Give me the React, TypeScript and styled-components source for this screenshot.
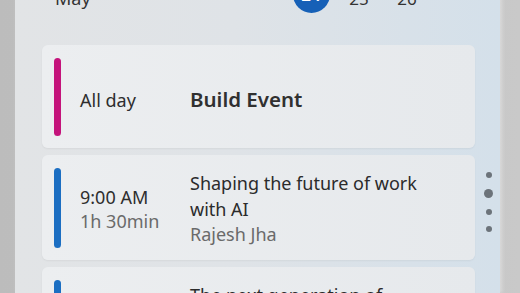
import styled, { createGlobalStyle } from "styled-components";

const GlobalStyle = createGlobalStyle`
  html, body {
    margin: 0;
    padding: 0;
  }
  body {
    font-family: "Noto Sans", "Open Sans", sans-serif;
    background: #bdbdbd;
  }
`;

const Page = styled.div`
  height: 293px;
  overflow: hidden;
  display: flex;
  padding: 0 20px 0 15px;
  background: linear-gradient(to right, #bcbcbc 0%, #c2c2c2 60%, #c9c9c9 100%);
`;

const Panel = styled.section`
  position: relative;
  flex: 1;
  margin-top: -40px;
  padding: 0 25px 0 27px;
  background: linear-gradient(to right, #e2e4e6 0%, #dfe3e7 45%, #d4e0ea 100%);
  box-shadow: 2px 0 4px rgba(255, 255, 255, 0.35);
`;

const Header = styled.header`
  height: 68px;
  display: flex;
  align-items: center;
  padding-left: 13px;
`;

const Month = styled.span`
  font-size: 18px;
  color: #333;
  margin-top: 8px;
`;

const Days = styled.div`
  display: flex;
  margin-left: auto;
  margin-right: 44px;
`;

const Day = styled.span<{ $today?: boolean }>`
  width: 48px;
  display: flex;
  justify-content: center;
  align-items: center;
  font-size: 17px;
  color: #333;
  margin-top: ${(p) => (p.$today ? "0" : "8px")};
`;

const TodayBadge = styled.span`
  width: 37px;
  height: 37px;
  border-radius: 50%;
  background: #1660b7;
  color: #fff;
  font-weight: 600;
  display: flex;
  align-items: center;
  justify-content: center;
`;

const List = styled.ul`
  list-style: none;
  margin: 17px 0 0;
  padding: 0;
  display: flex;
  flex-direction: column;
  gap: 7px;
`;

const Card = styled.li`
  display: flex;
  gap: 19px;
  padding: 13px 12px 12px;
  border-radius: 6px;
  background: linear-gradient(to right, #eceef0, #e6e9ec);
  box-shadow: 0 1px 2px rgba(0, 0, 0, 0.05);
`;

const Accent = styled.span<{ $color: string }>`
  flex: 0 0 7px;
  min-height: 78px;
  border-radius: 4px;
  background: ${(p) => p.$color};
`;

const Body = styled.div<{ $center?: boolean }>`
  display: flex;
  align-items: ${(p) => (p.$center ? "center" : "flex-start")};
  flex: 1;
  padding-top: ${(p) => (p.$center ? "5px" : "3px")};
`;

const When = styled.div`
  flex: 0 0 110px;
  align-self: center;
  display: flex;
  flex-direction: column;
  font-size: 18px;
  line-height: 24px;
  color: #2e2e2e;
`;

const Duration = styled.span`
  color: #6a6a6a;
`;

const Info = styled.div`
  max-width: 250px;
  display: flex;
  flex-direction: column;
  font-size: 18px;
  line-height: 25.5px;
  color: #2b2b2b;
`;

const Title = styled.span<{ $strong?: boolean }>`
  font-size: ${(p) => (p.$strong ? "20.5px" : "18px")};
  font-weight: ${(p) => (p.$strong ? 600 : 400)};
  color: ${(p) => (p.$strong ? "#303030" : "inherit")};
`;

const Organizer = styled.span`
  color: #6a6a6a;
`;

const ScrollDots = styled.div`
  position: absolute;
  right: 7px;
  top: 212px;
  width: 9px;
  display: flex;
  flex-direction: column;
  align-items: center;
  gap: 11px;
`;

const Dot = styled.span<{ $big?: boolean }>`
  width: ${(p) => (p.$big ? "9px" : "6px")};
  height: ${(p) => (p.$big ? "9px" : "6px")};
  border-radius: 50%;
  background: #6c737a;
`;

type Event = {
  id: string;
  color: string;
  time: string;
  duration?: string;
  title: string;
  organizer?: string;
  allDay?: boolean;
};

const events: Event[] = [
  { id: "build", color: "#c4137b", time: "All day", title: "Build Event", allDay: true },
  {
    id: "ai",
    color: "#1b6ec2",
    time: "9:00 AM",
    duration: "1h 30min",
    title: "Shaping the future of work with AI",
    organizer: "Rajesh Jha",
  },
  {
    id: "next",
    color: "#1b6ec2",
    time: "11:00 AM",
    duration: "1h",
    title: "The next generation of developer tools",
    organizer: "Scott Guthrie",
  },
];

export default function App() {
  return (
    <>
      <GlobalStyle />
      <Page>
        <Panel>
          <Header>
            <Month>May</Month>
            <Days>
              <Day $today>
                <TodayBadge>24</TodayBadge>
              </Day>
              <Day>25</Day>
              <Day>26</Day>
            </Days>
          </Header>
          <List>
            {events.map((ev) => (
              <Card key={ev.id}>
                <Accent $color={ev.color} />
                <Body $center={ev.allDay}>
                  <When>
                    <span>{ev.time}</span>
                    {ev.duration && <Duration>{ev.duration}</Duration>}
                  </When>
                  <Info>
                    <Title $strong={ev.allDay}>{ev.title}</Title>
                    {ev.organizer && <Organizer>{ev.organizer}</Organizer>}
                  </Info>
                </Body>
              </Card>
            ))}
          </List>
          <ScrollDots>
            <Dot />
            <Dot $big />
            <Dot />
            <Dot />
          </ScrollDots>
        </Panel>
      </Page>
    </>
  );
}
